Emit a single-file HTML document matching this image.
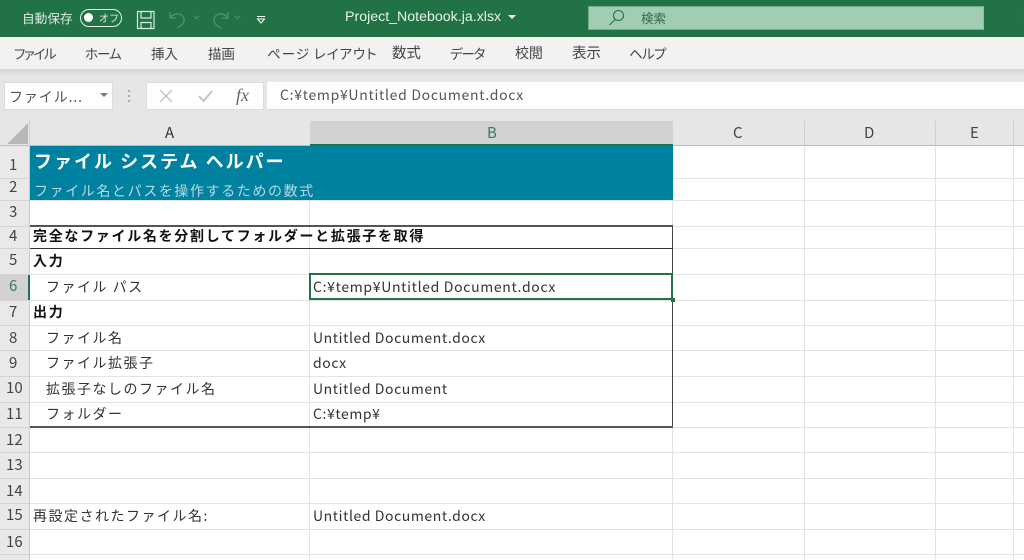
<!DOCTYPE html>
<html lang="ja"><head><meta charset="utf-8"><title>Project_Notebook.ja.xlsx</title>
<style>
html,body{margin:0;padding:0}
body{width:1024px;height:560px;overflow:hidden;position:relative;background:#fff;font-family:"Noto Sans CJK JP","Liberation Sans",sans-serif;color:#444}
.a{position:absolute}
.t{position:absolute;white-space:nowrap;line-height:20px;height:20px}
.l{font-family:"Liberation Sans","Noto Sans CJK JP",sans-serif}
.r{color:#444;font-size:15px}
.c{font-size:14px;color:#333;letter-spacing:.58px}
.cj{font-size:14px;color:#333;letter-spacing:1.5px}
.b{font-weight:700;color:#111;font-size:14px;letter-spacing:1.7px}
.hl{position:absolute;height:1px;background:#e3e3e3;left:30px;width:994px}
.vl{position:absolute;width:1px;background:#e3e3e3;top:146px;height:414px}
.rb{font-size:13.5px;letter-spacing:-.1px}
</style></head><body>
<div class="a" style="left:0;top:0;width:1024px;height:37px;background:#217346"></div>
<div class="a" style="left:0;top:37px;width:1024px;height:32px;background:#f3f2f1"></div>
<div class="a" style="left:0;top:69px;width:1024px;height:52px;background:#e6e6e6"></div>
<div class="a" style="left:0;top:69px;width:1024px;height:6px;background:linear-gradient(#d2d2d2,#e6e6e6)"></div>

<div class="t" style="left:22px;top:8px;font-size:12.7px;color:#dcebe2">自動保存</div>
<div class="a" style="left:80px;top:9px;width:40px;height:16px;border:1px solid #e8f1ec;border-radius:9px"></div>
<div class="a" style="left:84px;top:13px;width:9px;height:9px;border-radius:50%;background:#fff"></div>
<div class="t" style="left:99px;top:8px;font-size:10px;color:#e8f1ec">オフ</div>
<svg class="a" style="left:136px;top:9px" width="20" height="22" viewBox="0 0 20 22" fill="none" stroke="#dcebe2" stroke-width="1.2"><path d="M1.5 2.5H18V19.5H1.5Z"/><path d="M5 2.5V9H15V2.5M5 19.5V13.5H15V19.5"/></svg>
<svg class="a" style="left:167px;top:9px" width="60" height="22" viewBox="0 0 60 22" fill="none" stroke="#4f9571" stroke-width="1.3"><path d="M3 3V9H9M3 9C7 3 16 4 17 10C17.600 14 14 17 10 19"/><path d="M27 7L29.500 9.500L32 7" stroke-width="1"/></svg>
<svg class="a" style="left:210px;top:9px" width="40" height="22" viewBox="0 0 40 22" fill="none" stroke="#4f9571" stroke-width="1.3"><path d="M18 3V9H12M18 9C14 3 5 4 4 10C3.400 14 7 17 11 19"/><path d="M25 7L27.500 9.500L30 7" stroke-width="1"/></svg>
<svg class="a" style="left:256px;top:15px" width="10" height="9" viewBox="0 0 10 9"><path d="M1 1.500H9" stroke="#fff" stroke-width="1"/><path d="M1.500 4H8.500L5 8Z" fill="none" stroke="#fff"/></svg>

<div class="t l" style="left:345px;top:7px;font-size:14.200px;color:#e8f1ec">Project_Notebook.ja.xlsx</div>
<div class="a" style="left:508px;top:15px;border-left:4px solid transparent;border-right:4px solid transparent;border-top:4px solid #f0f6f2"></div>
<div class="a" style="left:588px;top:6px;width:396px;height:24px;background:#a1cdb4;box-sizing:border-box;border:1px solid #75ab8d;border-right-color:#8dbda2"></div>
<svg class="a" style="left:608px;top:9px" width="18" height="18" viewBox="0 0 18 18" fill="none" stroke="#2b6b49" stroke-width="1.100"><circle cx="10.500" cy="6.500" r="5"/><path d="M7 10.500L1.500 16"/></svg>
<div class="t" style="left:641px;top:8px;font-size:12.500px;color:#33674b">検索</div>
<div class="a" style="left:1016px;top:11px;width:11px;height:11px;border:2px solid #2f6b4b;border-radius:50%;box-sizing:border-box;opacity:.8"></div>

<div class="t rb" style="left:14px;top:43px;font-feature-settings:'palt';letter-spacing:-1.4px">ファイル</div>
<div class="t rb" style="left:85px;top:43px;font-feature-settings:'palt';letter-spacing:-1px">ホーム</div>
<div class="t rb" style="left:151px;top:43px">挿入</div>
<div class="t rb" style="left:208px;top:43px">描画</div>
<div class="t rb" style="left:267px;top:43px;font-feature-settings:'palt';letter-spacing:.95px">ページ レイアウト</div>
<div class="t rb" style="left:392px;top:43px;font-size:14.500px">数式</div>
<div class="t rb" style="left:450px;top:43px;font-feature-settings:'palt';letter-spacing:-1.2px">データ</div>
<div class="t rb" style="left:515px;top:43px;font-size:14px">校閲</div>
<div class="t rb" style="left:572px;top:43px;font-size:14.500px">表示</div>
<div class="t rb" style="left:629px;top:43px;font-feature-settings:'palt';letter-spacing:-.7px">ヘルプ</div>

<div class="a" style="left:4px;top:82px;width:109px;height:28px;background:#fff;box-sizing:border-box;border:1px solid #dcdcdc"></div>
<div class="t" style="left:9px;top:87px;font-size:14px;letter-spacing:.9px;color:#555">ファイル...</div>
<div class="a" style="left:100px;top:93px;border-left:4px solid transparent;border-right:4px solid transparent;border-top:4px solid #777"></div>
<div class="a" style="left:128px;top:90px;width:2px;height:2px;background:#aaa;box-shadow:0 5px 0 #aaa,0 10px 0 #aaa"></div>
<div class="a" style="left:146px;top:82px;width:118px;height:28px;background:#fff;box-sizing:border-box;border:1px solid #dcdcdc"></div>
<svg class="a" style="left:158px;top:88px" width="16" height="16" viewBox="0 0 16 16" fill="none" stroke="#c4c4c4" stroke-width="1.500"><path d="M2 2L14 14M14 2L2 14"/></svg>
<svg class="a" style="left:197px;top:88px" width="17" height="16" viewBox="0 0 17 16" fill="none" stroke="#c4c4c4" stroke-width="2"><path d="M2 8L6.500 13L15 3"/></svg>
<div class="t" style="left:236px;top:85px;font-family:'Liberation Serif',serif;font-style:italic;font-size:18px;color:#666">fx</div>
<div class="a" style="left:267px;top:82px;width:757px;height:28px;background:#fff;border-bottom:1px solid #dcdcdc;box-sizing:border-box"></div>
<div class="t c" style="left:280px;top:85px;color:#555;letter-spacing:.7px">C:¥temp¥Untitled Document.docx</div>

<div class="a" style="left:0;top:121px;width:1024px;height:25px;background:#e6e6e6"></div>
<div class="a" style="left:0;top:145px;width:1024px;height:1px;background:#bdbdbd"></div>
<svg class="a" style="left:0;top:121px" width="30" height="25"><path d="M7 23L28 2V23Z" fill="#b7b7b7"/><path d="M29.500 0V25" stroke="#cfcfcf"/></svg>
<div class="a" style="left:310px;top:121px;width:363px;height:25px;background:#d2d2d2"></div>
<div class="a" style="left:310px;top:144px;width:363px;height:2px;background:#217346"></div>
<div class="a" style="left:804px;top:121px;width:1px;height:25px;background:#cfcfcf"></div>
<div class="a" style="left:935px;top:121px;width:1px;height:25px;background:#cfcfcf"></div>
<div class="a" style="left:1013px;top:121px;width:1px;height:25px;background:#cfcfcf"></div>
<div class="t" style="left:165px;top:123px;font-size:15px;color:#333">A</div>
<div class="t" style="left:487px;top:123px;font-size:15px;color:#3f7a5a">B</div>
<div class="t" style="left:733px;top:123px;font-size:15px;color:#444">C</div>
<div class="t" style="left:864px;top:123px;font-size:15px;color:#444">D</div>
<div class="t" style="left:970px;top:123px;font-size:15px;color:#444">E</div>

<div class="a" style="left:0;top:146px;width:29px;height:414px;background:#e9e9e9"></div>
<div class="a" style="left:29px;top:146px;width:1px;height:414px;background:#c9c9c9"></div>
<div class="a" style="left:0;top:274px;width:29px;height:26px;background:#d2d2d2"></div>
<div class="a" style="left:28px;top:274px;width:2px;height:26px;background:#217346"></div>

<div class="hl" style="top:178px;left:0;width:30px;background:#d4d4d4"></div>
<div class="hl" style="top:200px;left:0;width:30px;background:#d4d4d4"></div>
<div class="hl" style="top:226px;left:0;width:30px;background:#d4d4d4"></div>
<div class="hl" style="top:248px;left:0;width:30px;background:#d4d4d4"></div>
<div class="hl" style="top:274px;left:0;width:30px;background:#d4d4d4"></div>
<div class="hl" style="top:300px;left:0;width:30px;background:#d4d4d4"></div>
<div class="hl" style="top:325px;left:0;width:30px;background:#d4d4d4"></div>
<div class="hl" style="top:350px;left:0;width:30px;background:#d4d4d4"></div>
<div class="hl" style="top:376px;left:0;width:30px;background:#d4d4d4"></div>
<div class="hl" style="top:402px;left:0;width:30px;background:#d4d4d4"></div>
<div class="hl" style="top:427px;left:0;width:30px;background:#d4d4d4"></div>
<div class="hl" style="top:452px;left:0;width:30px;background:#d4d4d4"></div>
<div class="hl" style="top:478px;left:0;width:30px;background:#d4d4d4"></div>
<div class="hl" style="top:503px;left:0;width:30px;background:#d4d4d4"></div>
<div class="hl" style="top:529px;left:0;width:30px;background:#d4d4d4"></div>
<div class="hl" style="top:554px;left:0;width:30px;background:#d4d4d4"></div>

<div class="hl" style="top:178px"></div><div class="hl" style="top:200px"></div><div class="hl" style="top:226px"></div><div class="hl" style="top:248px"></div><div class="hl" style="top:274px"></div><div class="hl" style="top:300px"></div><div class="hl" style="top:325px"></div><div class="hl" style="top:350px"></div><div class="hl" style="top:376px"></div><div class="hl" style="top:402px"></div><div class="hl" style="top:427px"></div><div class="hl" style="top:452px"></div><div class="hl" style="top:478px"></div><div class="hl" style="top:503px"></div><div class="hl" style="top:529px"></div><div class="hl" style="top:554px"></div>
<div class="vl" style="left:309px"></div><div class="vl" style="left:672px"></div><div class="vl" style="left:804px"></div><div class="vl" style="left:935px"></div><div class="vl" style="left:1013px"></div>

<div class="t r" style="left:9px;top:155px">1</div>
<div class="t r" style="left:9px;top:177px">2</div>
<div class="t r" style="left:9px;top:202px">3</div>
<div class="t r" style="left:9px;top:226px">4</div>
<div class="t r" style="left:9px;top:250px">5</div>
<div class="t r" style="left:9px;top:276px;color:#3f7a5a">6</div>
<div class="t r" style="left:9px;top:302px">7</div>
<div class="t r" style="left:9px;top:328px">8</div>
<div class="t r" style="left:9px;top:353px">9</div>
<div class="t r" style="left:6px;top:378px">10</div>
<div class="t r" style="left:6px;top:404px">11</div>
<div class="t r" style="left:6px;top:430px">12</div>
<div class="t r" style="left:6px;top:455px">13</div>
<div class="t r" style="left:6px;top:481px">14</div>
<div class="t r" style="left:6px;top:505px">15</div>
<div class="t r" style="left:6px;top:532px">16</div>

<div class="a" style="left:30px;top:146px;width:643px;height:54px;background:#00819f"></div>
<div class="t" style="left:34px;top:151px;font-size:18px;font-weight:700;color:#fff;letter-spacing:2px">ファイル システム ヘルパー</div>
<div class="t" style="left:34px;top:181px;font-size:14px;color:#b5dbe5;letter-spacing:1.6px">ファイル名とパスを操作するための数式</div>

<div class="a" style="left:30px;top:226px;width:643px;height:202px;box-sizing:border-box;border-right:1.500px solid #444"></div>
<div class="a" style="left:30px;top:225px;width:643px;height:2px;background:#555"></div>
<div class="a" style="left:30px;top:248px;width:643px;height:1px;background:#333"></div>
<div class="a" style="left:30px;top:426px;width:643px;height:2px;background:#555"></div>

<div class="t b" style="left:33px;top:226px">完全なファイル名を分割してフォルダーと拡張子を取得</div>
<div class="t b" style="left:33px;top:251px">入力</div>
<div class="t cj" style="left:46px;top:277px">ファイル パス</div>
<div class="t b" style="left:33px;top:302px">出力</div>
<div class="t cj" style="left:46px;top:328px">ファイル名</div>
<div class="t cj" style="left:46px;top:353px">ファイル拡張子</div>
<div class="t cj" style="left:46px;top:379px">拡張子なしのファイル名</div>
<div class="t cj" style="left:46px;top:404px">フォルダー</div>
<div class="t cj" style="left:33px;top:506px;letter-spacing:1.5px">再設定されたファイル名:</div>

<div class="a" style="left:309px;top:273px;width:364px;height:27px;box-sizing:border-box;border:2px solid #217346"></div>
<div class="a" style="left:671px;top:298px;width:4px;height:4px;background:#217346"></div>
<div class="t c" style="left:313px;top:277px;letter-spacing:.67px">C:¥temp¥Untitled Document.docx</div>
<div class="t c" style="left:313px;top:328px">Untitled Document.docx</div>
<div class="t c" style="left:313px;top:353px">docx</div>
<div class="t c" style="left:313px;top:379px">Untitled Document</div>
<div class="t c" style="left:313px;top:404px">C:¥temp¥</div>
<div class="t c" style="left:313px;top:506px">Untitled Document.docx</div>
</body></html>
